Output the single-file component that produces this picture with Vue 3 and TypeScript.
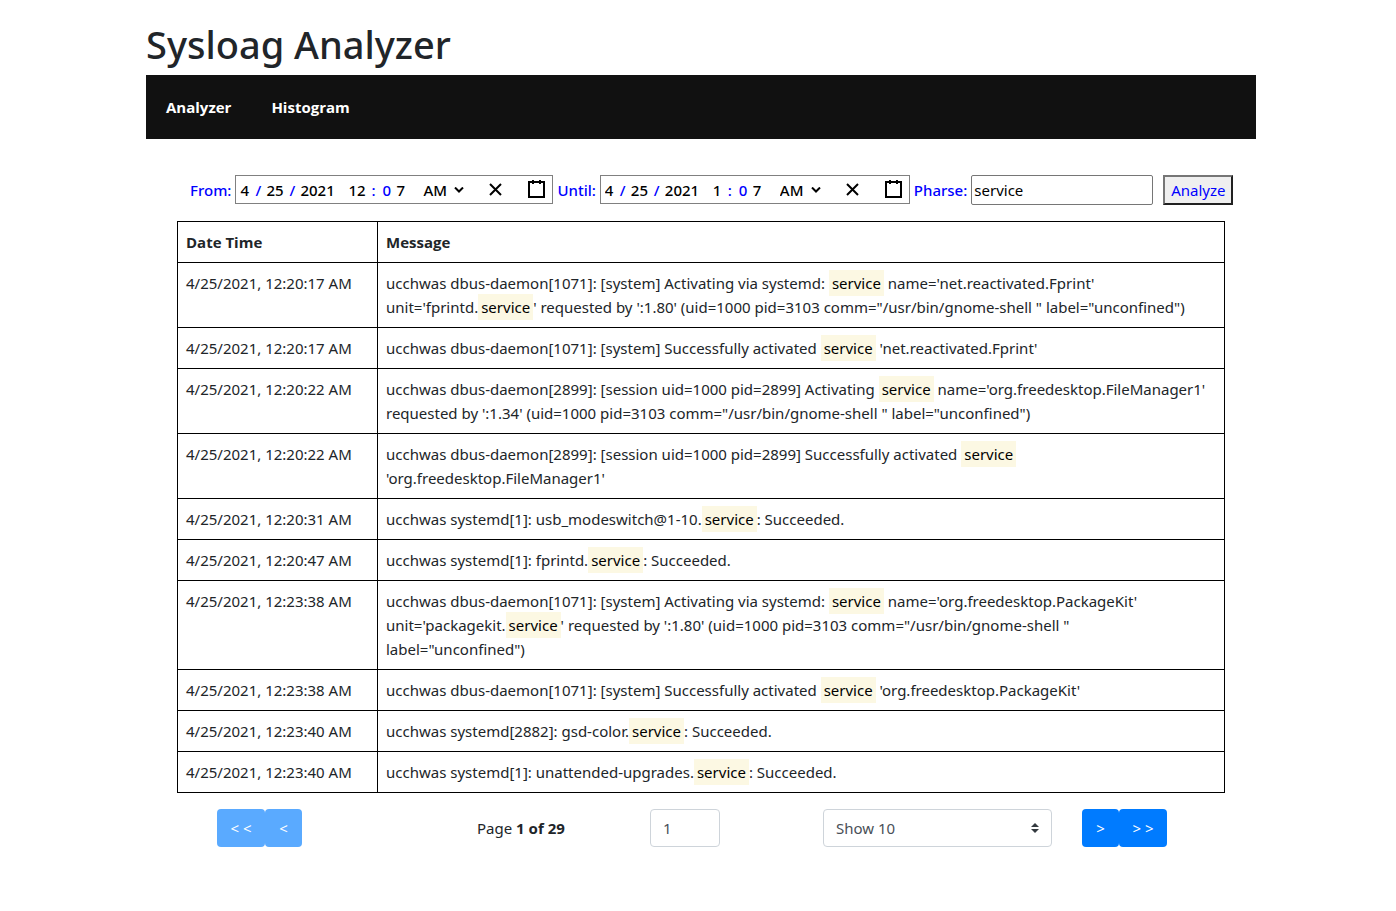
<script setup lang="ts">
import { computed, ref } from 'vue'

interface DateField {
  id: string
  label: string
  month: string
  day: string
  year: string
  hour: string
  minute: string
}

interface LogEntry {
  time: string
  message: string
}

const fields = ref<DateField[]>([
  { id: 'from', label: 'From:', month: '4', day: '25', year: '2021', hour: '12', minute: '7' },
  { id: 'until', label: 'Until:', month: '4', day: '25', year: '2021', hour: '1', minute: '7' },
])

const phrase = ref('service')
const page = ref(1)
const pageSize = ref(10)
const pageCount = 29

const entries: LogEntry[] = [
  {
    time: '4/25/2021, 12:20:17 AM',
    message: `ucchwas dbus-daemon[1071]: [system] Activating via systemd: service name='net.reactivated.Fprint' unit='fprintd.service' requested by ':1.80' (uid=1000 pid=3103 comm="/usr/bin/gnome-shell " label="unconfined")`,
  },
  {
    time: '4/25/2021, 12:20:17 AM',
    message: `ucchwas dbus-daemon[1071]: [system] Successfully activated service 'net.reactivated.Fprint'`,
  },
  {
    time: '4/25/2021, 12:20:22 AM',
    message: `ucchwas dbus-daemon[2899]: [session uid=1000 pid=2899] Activating service name='org.freedesktop.FileManager1' requested by ':1.34' (uid=1000 pid=3103 comm="/usr/bin/gnome-shell " label="unconfined")`,
  },
  {
    time: '4/25/2021, 12:20:22 AM',
    message: `ucchwas dbus-daemon[2899]: [session uid=1000 pid=2899] Successfully activated service 'org.freedesktop.FileManager1'`,
  },
  { time: '4/25/2021, 12:20:31 AM', message: 'ucchwas systemd[1]: usb_modeswitch@1-10.service: Succeeded.' },
  { time: '4/25/2021, 12:20:47 AM', message: 'ucchwas systemd[1]: fprintd.service: Succeeded.' },
  {
    time: '4/25/2021, 12:23:38 AM',
    message: `ucchwas dbus-daemon[1071]: [system] Activating via systemd: service name='org.freedesktop.PackageKit' unit='packagekit.service' requested by ':1.80' (uid=1000 pid=3103 comm="/usr/bin/gnome-shell "\nlabel="unconfined")`,
  },
  {
    time: '4/25/2021, 12:23:38 AM',
    message: `ucchwas dbus-daemon[1071]: [system] Successfully activated service 'org.freedesktop.PackageKit'`,
  },
  { time: '4/25/2021, 12:23:40 AM', message: 'ucchwas systemd[2882]: gsd-color.service: Succeeded.' },
  { time: '4/25/2021, 12:23:40 AM', message: 'ucchwas systemd[1]: unattended-upgrades.service: Succeeded.' },
]

const rows = computed(() =>
  entries.map((entry) => ({
    time: entry.time,
    parts: entry.message.split(/(service)/).map((text) => ({ text, hit: text === 'service' })),
  })),
)
</script>

<template>
  <div class="page">
    <div class="container">
      <h1>Sysloag Analyzer</h1>
      <nav>
        <a href="#analyzer">Analyzer</a>
        <a href="#histogram">Histogram</a>
      </nav>

      <main>
        <form @submit.prevent>
          <template v-for="f in fields" :key="f.id">
            <label :for="f.id + '-month'">{{ f.label }}</label>
            <div class="picker">
              <input :id="f.id + '-month'" v-model="f.month" class="one" aria-label="Month" />
              <span class="slash">/</span>
              <input v-model="f.day" class="two" aria-label="Day" />
              <span class="slash">/</span>
              <input v-model="f.year" class="four" aria-label="Year" />
              <input v-model="f.hour" :class="f.hour.length > 1 ? 'two' : 'one'" aria-label="Hour" />
              <span class="colon">:</span>
              <span class="zero">0</span>
              <input v-model="f.minute" class="minute" aria-label="Minute" />
              <span class="ampm">
                <select aria-label="AM or PM">
                  <option>AM</option>
                  <option>PM</option>
                </select>
                <svg width="10" height="6" viewBox="0 0 10 6"><path d="M1 0.5l4 4 4-4" /></svg>
              </span>
              <button type="button" class="icon clear" aria-label="Clear">
                <svg width="19" height="19" viewBox="0 0 19 19"><path d="M4 4l11 11M15 4L4 15" /></svg>
              </button>
              <button type="button" class="icon" aria-label="Open calendar">
                <svg width="19" height="19" viewBox="0 0 19 19">
                  <rect x="2" y="2" width="15" height="15" />
                  <path d="M6 0v4M13 0v4" />
                </svg>
              </button>
            </div>
          </template>
          <label for="phrase">Pharse:</label>
          <input id="phrase" v-model="phrase" class="phrase" type="text" />
          <button type="submit" class="analyze">Analyze</button>
        </form>

        <table>
          <thead>
            <tr>
              <th class="time">Date Time</th>
              <th>Message</th>
            </tr>
          </thead>
          <tbody>
            <tr v-for="(row, i) in rows" :key="i">
              <td>{{ row.time }}</td>
              <td class="message"><template v-for="(part, j) in row.parts" :key="j"><mark v-if="part.hit">{{ part.text }}</mark><template v-else>{{ part.text }}</template></template></td>
            </tr>
          </tbody>
        </table>

        <div class="pagination">
          <div class="group">
            <button type="button" class="wide" disabled>&lt; &lt;</button>
            <button type="button" disabled>&lt;</button>
          </div>
          <span>Page <strong>{{ page }} of {{ pageCount }}</strong></span>
          <input v-model="page" class="goto" type="text" aria-label="Go to page" />
          <span class="size">
            <select v-model="pageSize" aria-label="Rows per page">
              <option :value="10">Show 10</option>
              <option :value="20">Show 20</option>
              <option :value="50">Show 50</option>
            </select>
            <svg width="8" height="10" viewBox="0 0 8 10"><path d="M0 4l4-4 4 4zM0 6h8l-4 4z" /></svg>
          </span>
          <div class="group">
            <button type="button">&gt;</button>
            <button type="button" class="wide">&gt; &gt;</button>
          </div>
        </div>
      </main>
    </div>
  </div>
</template>

<style>
body {
  margin: 0;
  background: #fff;
}
</style>

<style scoped>
.page {
  padding: 20px 0 24px 6px;
  color: #212529;
  font-family: 'Segoe UI', 'Noto Sans', 'Open Sans', sans-serif;
  font-size: 15px;
  line-height: 24px;
}
.page *,
.page *::before {
  box-sizing: border-box;
}
.container {
  max-width: 1110px;
  margin: 0 auto;
}
h1 {
  margin: 0 0 7px;
  font-size: 38px;
  font-weight: 500;
  line-height: 48px;
}
nav {
  display: flex;
  background: #111;
}
nav a {
  padding: 20px;
  color: #fff;
  font-family: 'Segoe UI', 'Open Sans', sans-serif;
  font-weight: 700;
  text-decoration: none;
}
main {
  padding: 36px 31px 0;
}
input,
select,
button {
  font-family: inherit;
  font-size: 15px;
  color: inherit;
}
form {
  display: flex;
  align-items: flex-start;
  width: max-content;
  height: 30px;
  margin: 0 0 16px 13px;
  color: #00f;
}
form label {
  margin-right: 4px;
  font-weight: 500;
  line-height: 30px;
}
.picker {
  display: flex;
  align-items: center;
  height: 29px;
  margin-right: 4px;
  padding-left: 4px;
  border: 1px solid gray;
  font-weight: 500;
}
.picker input {
  height: 24px;
  padding: 0;
  border: 0;
  outline: 0;
  background: none;
  color: #000;
  font-weight: 500;
}
.picker .one {
  width: 15px;
}
.slash {
  width: 11px;
}
.picker .two {
  width: 23px;
}
.picker .four {
  width: 48px;
}
.colon {
  width: 11px;
}
.zero {
  width: 14px;
}
.picker .minute {
  width: 27px;
}
.ampm,
.size {
  display: grid;
  align-items: center;
}
.ampm select,
.ampm svg,
.size select,
.size svg {
  grid-area: 1 / 1;
}
.ampm svg,
.size svg {
  justify-self: end;
  pointer-events: none;
}
.ampm {
  width: 43px;
}
.ampm select {
  height: 24px;
  padding: 0;
  border: 0;
  appearance: none;
  background: none;
  color: #000;
  font-weight: 500;
}
.ampm svg {
  margin-right: 2px;
}
.ampm path {
  fill: none;
  stroke: #000;
  stroke-width: 2;
}
.icon {
  display: flex;
  padding: 4px 6px;
  border: 0;
  background: none;
}
.icon svg {
  fill: none;
  stroke: #000;
  stroke-width: 2;
}
.clear {
  margin: 0 10px 0 14px;
}
.phrase {
  width: 182px;
  height: 30px;
  margin-right: 10px;
  padding: 1px 2px;
  border: 1px solid #767676;
  border-radius: 2px;
  color: #000;
}
.analyze {
  width: 70px;
  height: 30px;
  padding: 0;
  border: 2px outset #767676;
  background: #efefef;
  color: #00f;
}
table {
  width: 100%;
  border-collapse: collapse;
  table-layout: fixed;
}
th,
td {
  padding: 8px;
  border: 1px solid #000;
  text-align: left;
  vertical-align: top;
}
th {
  font-family: 'Segoe UI', 'Open Sans', sans-serif;
  font-weight: 700;
}
.time {
  width: 200px;
}
.message {
  white-space: pre-line;
}
mark {
  padding: 3px;
  background: #fcf8e3;
  color: #000;
}
.pagination {
  display: grid;
  grid-template-columns: 260fr 173fr 173fr 259fr 143fr;
  align-items: center;
  margin-top: 16px;
  padding-left: 40px;
}
.group {
  display: flex;
}
.group button {
  width: 37px;
  height: 38px;
  padding: 0;
  border: 0;
  border-radius: 4px;
  background: #007bff;
  color: #fff;
}
.group .wide {
  width: 48px;
}
.group button:disabled {
  background: #5aaaff;
}
.goto,
.size select {
  height: 38px;
  padding: 0 12px;
  border: 1px solid #ced4da;
  border-radius: 4px;
  background: #fff;
  color: #495057;
}
.goto {
  width: 70px;
}
.size {
  margin-right: 30px;
}
.size select {
  width: 100%;
  appearance: none;
}
.size svg {
  margin-right: 13px;
  fill: #343a40;
}
</style>
